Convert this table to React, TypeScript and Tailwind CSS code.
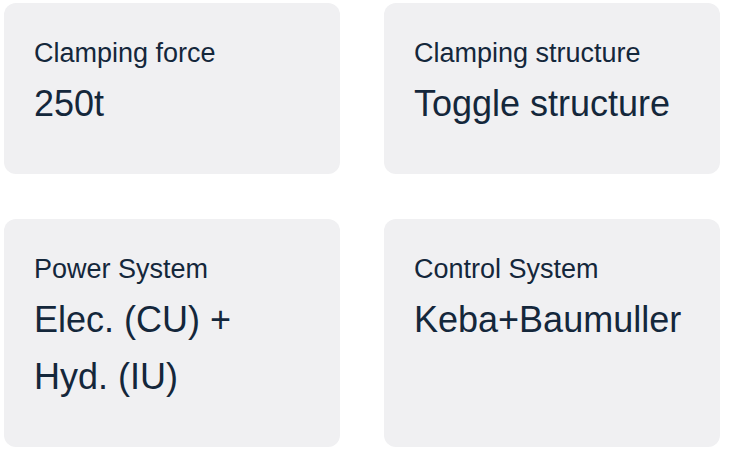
const specs = [
  { label: "Clamping force", value: "250t" },
  { label: "Clamping structure", value: "Toggle structure" },
  { label: "Power System", value: "Elec. (CU) + Hyd. (IU)" },
  { label: "Control System", value: "Keba+Baumuller" },
];

const App = () => {
  return (
    <div className="min-h-screen bg-white font-['Liberation_Sans',Arial,sans-serif]">
      <div className="grid grid-cols-[336px_336px] gap-x-[44px] gap-y-[45px] pl-[4px] pt-[3px]">
        {specs.map((spec) => (
          <div
            key={spec.label}
            className="rounded-xl bg-[#f0f0f2] pl-[30px] pr-[36px] pt-[29px] pb-[42px] text-[#14273b]"
          >
            <div className="text-[27px] leading-[43px]">{spec.label}</div>
            <div className="text-[36px] leading-[57px]">{spec.value}</div>
          </div>
        ))}
      </div>
    </div>
  );
};

export default App;
